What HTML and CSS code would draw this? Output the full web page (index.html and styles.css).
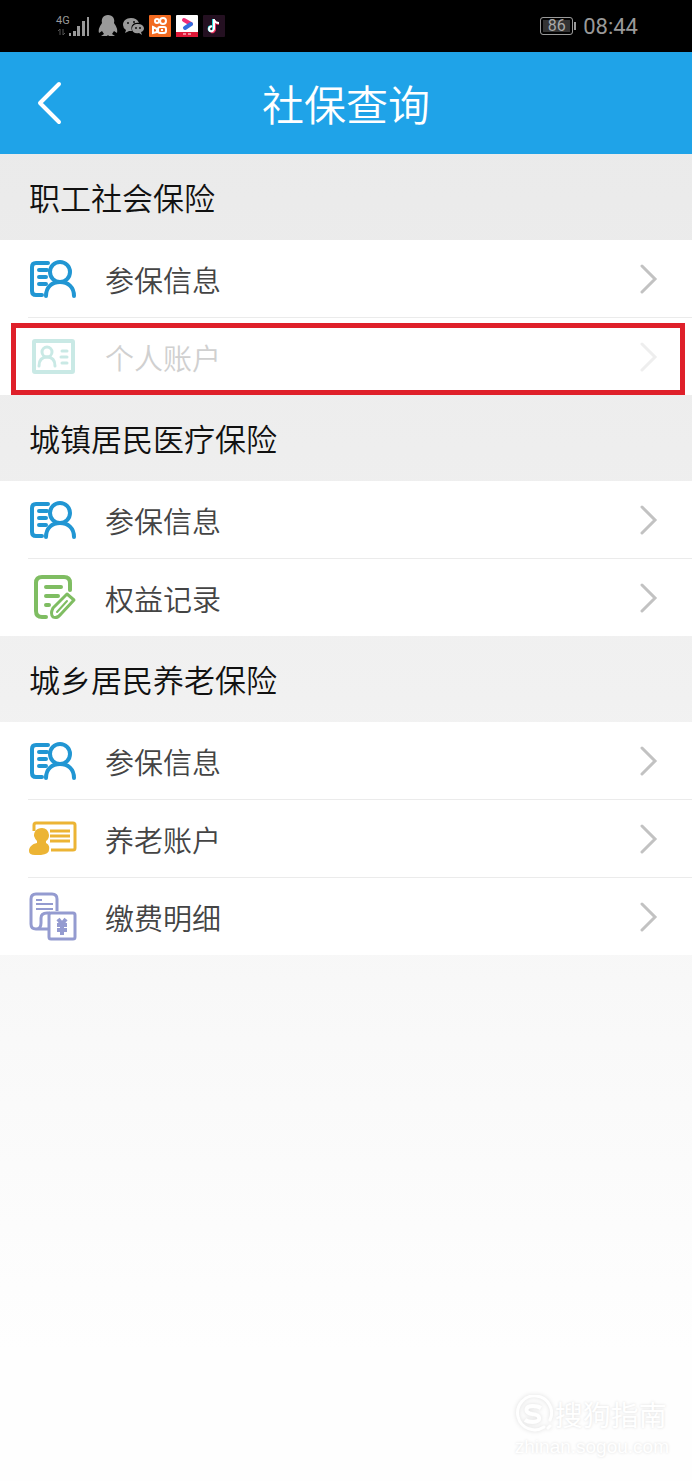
FILE: index.html
```html
<!DOCTYPE html>
<html lang="zh-CN">
<head>
    <meta charset="UTF-8">
    <meta name="viewport" content="width=device-width, initial-scale=1.0">
    <title>社保查询</title>
    <link rel="stylesheet" href="styles.css">
</head>
<body>
    <!-- 图标定义 -->
    <svg class="defs" aria-hidden="true">
        <symbol id="icon-info" viewBox="0 0 48 40">
            <g fill="none" stroke="currentColor" stroke-width="4" stroke-linecap="round" stroke-linejoin="round">
                <path d="M19 4H7Q3 4 3 8V32Q3 36 7 36H13M10 11H18M10 18H17M10 25H17"/>
                <circle cx="31" cy="13" r="10"/>
                <path d="M17 37C17 28 23 23 31 23S45 28 45 37"/>
            </g>
        </symbol>
        <symbol id="icon-card" viewBox="0 0 48 40">
            <g fill="none" stroke="currentColor" stroke-width="4" stroke-linecap="round">
                <rect x="5" y="4" width="39" height="31" rx="1"/>
                <path d="M33 14H38M32 20H38M33 26H38" stroke-width="3"/>
                <circle cx="18" cy="15" r="5" stroke-width="3"/>
                <path d="M10 29C10 23 13 20 18 20S26 23 26 29" stroke-width="3"/>
            </g>
        </symbol>
        <symbol id="icon-record" viewBox="0 0 48 48">
            <g fill="none" stroke="currentColor" stroke-width="4" stroke-linecap="round" stroke-linejoin="round">
                <path d="M17 43H13Q7 43 7 37V9Q7 3 13 3H35Q41 3 41 9V16M17 13H32M17 22H29M17 31H20"/>
                <path d="M38 20L24 34Q21 40 24 43Q28 45 32 40L45 26Z" stroke-width="3"/>
                <path d="M28 38L38 27" stroke-width="2"/>
            </g>
        </symbol>
        <symbol id="icon-pension" viewBox="0 0 48 40">
            <path d="M5 12V6Q5 4 7 4H44Q46 4 46 6V29Q46 31 44 31H22M21 12H41M21 17H41M21 22H41" fill="none" stroke="currentColor" stroke-width="3"/>
            <path d="M13 9C7 9 5 13 5 17Q6 20 8 22V24C3 25 0 28 0 32Q0 36 6 36H12Q20 35 20 31C21 27 19 25 17 24V22Q20 20 20 16Q19 9 13 9Z" fill="currentColor"/>
        </symbol>
        <symbol id="icon-pay" viewBox="0 0 48 50">
            <g fill="none" stroke="currentColor" stroke-width="3" stroke-linejoin="round">
                <path d="M28 19V7Q28 2 23 2H7Q2 2 2 7V32Q2 37 7 37Q12 37 12 31V26Q12 21 18 21H21M7 37H19"/>
                <path d="M7 8H13M7 12H24M7 17H24" stroke-width="2"/>
                <rect x="20" y="21" width="26" height="26" rx="2"/>
                <path d="M29 27L33 32L37 27M28 33H38M28 38H38M33 32V43" stroke-width="4"/>
            </g>
        </symbol>
        <symbol id="icon-next" viewBox="0 0 18 30">
            <path d="M2 2L15 15L2 28" fill="none" stroke="currentColor" stroke-width="3" stroke-linecap="round"/>
        </symbol>
    </svg>

    <div class="status-bar">
        <div class="status-left">
            <div class="signal">
                <span class="network">4G</span>
                <svg width="34" height="22" viewBox="0 0 34 22" aria-hidden="true">
                    <path d="M13 18H15V21H13ZM17 16H20V21H17ZM21 11H24V21H21ZM26 6H29V21H26ZM31 2H33V21H31Z" fill="#999"/>
                    <path d="M4 20V14L2 16M7 14V20L9 18" fill="none" stroke="#555"/>
                </svg>
            </div>
            <svg width="20" height="22" viewBox="0 0 20 22" aria-hidden="true">
                <path d="M10 0C5 0 3 4 4 8C2 11 0 14 1 18L4 16L6 19L3 21H9L10 20L11 21H17L14 19L16 16L19 18C20 14 18 11 16 8C17 4 15 0 10 0Z" fill="#999"/>
            </svg>
            <svg width="21" height="20" viewBox="0 0 21 20" aria-hidden="true">
                <path d="M8 2C3 2 0 5 0 9Q0 12 3 14L2 17L6 15H9C7 9 11 6 16 7Q14 2 8 2Z" fill="#999"/>
                <path d="M15 8C11 8 9 10 9 13S12 18 16 17L19 19L18 16Q21 15 21 12Q20 8 15 8Z" fill="#999"/>
                <g fill="#111"><circle cx="5" cy="7" r="1"/><circle cx="11" cy="6" r="1"/><circle cx="13" cy="12" r="1"/><circle cx="17" cy="12" r="1"/></g>
            </svg>
            <svg width="22" height="22" viewBox="0 0 22 22" aria-hidden="true">
                <rect width="22" height="22" rx="1" fill="#f26a20"/>
                <g fill="none" stroke="#fff" stroke-width="2">
                    <circle cx="8" cy="6" r="2"/><circle cx="14" cy="6" r="3"/>
                    <rect x="9" y="12" width="8" height="6" rx="2"/>
                    <path d="M4 12L8 14V17L4 18ZM12 15H14"/>
                </g>
            </svg>
            <svg width="22" height="22" viewBox="0 0 22 22" aria-hidden="true">
                <rect width="22" height="22" rx="1" fill="#fff"/>
                <path d="M0 17H22V22H0Z" fill="#df1838"/>
                <path d="M8 5L15 9" stroke="#f12b76" stroke-width="4" stroke-linecap="round"/>
                <path d="M15 9L9 13" stroke="#326dde" stroke-width="4" stroke-linecap="round"/>
                <path d="M7 19H10M12 19H15" stroke="#fff"/>
            </svg>
            <svg width="22" height="22" viewBox="0 0 22 22" aria-hidden="true">
                <rect width="22" height="22" rx="1" fill="#241021"/>
                <g fill="none" stroke-width="2">
                    <path d="M10 4V14Q10 17 7 16Q5 15 6 12L8 11M10 5Q12 8 15 8" stroke="#25d9dc"/>
                    <path d="M12 5V15Q11 18 8 17M12 6Q13 9 16 9" stroke="#ed315c"/>
                    <path d="M11 4V14Q10 17 7 16Q5 14 7 12L9 11M11 5Q12 8 16 8" stroke="#fff"/>
                </g>
            </svg>
        </div>
        <div class="status-right">
            <span class="battery">86</span>
            <span class="clock">08:44</span>
        </div>
    </div>

    <header class="nav">
        <button class="back" type="button" aria-label="返回">
            <svg width="26" height="44" viewBox="0 0 26 44">
                <path d="M23 3L4 22L23 41" fill="none" stroke="currentColor" stroke-width="4" stroke-linecap="round" stroke-linejoin="round"/>
            </svg>
        </button>
        <h1>社保查询</h1>
    </header>

    <main>
        <section>
            <h2>职工社会保险</h2>
            <ul class="list">
                <li><a class="row" href="#">
                    <svg class="icon blue"><use href="#icon-info"/></svg>
                    <span class="label">参保信息</span>
                    <svg class="next"><use href="#icon-next"/></svg>
                </a></li>
                <li class="marked"><a class="row faded" href="#">
                    <svg class="icon teal"><use href="#icon-card"/></svg>
                    <span class="label">个人账户</span>
                    <svg class="next"><use href="#icon-next"/></svg>
                </a></li>
            </ul>
        </section>
        <section>
            <h2>城镇居民医疗保险</h2>
            <ul class="list">
                <li><a class="row" href="#">
                    <svg class="icon blue"><use href="#icon-info"/></svg>
                    <span class="label">参保信息</span>
                    <svg class="next"><use href="#icon-next"/></svg>
                </a></li>
                <li><a class="row" href="#">
                    <svg class="icon tall green"><use href="#icon-record"/></svg>
                    <span class="label">权益记录</span>
                    <svg class="next"><use href="#icon-next"/></svg>
                </a></li>
            </ul>
        </section>
        <section>
            <h2>城乡居民养老保险</h2>
            <ul class="list">
                <li><a class="row" href="#">
                    <svg class="icon blue"><use href="#icon-info"/></svg>
                    <span class="label">参保信息</span>
                    <svg class="next"><use href="#icon-next"/></svg>
                </a></li>
                <li><a class="row" href="#">
                    <svg class="icon yellow"><use href="#icon-pension"/></svg>
                    <span class="label">养老账户</span>
                    <svg class="next"><use href="#icon-next"/></svg>
                </a></li>
                <li><a class="row" href="#">
                    <svg class="icon tall purple"><use href="#icon-pay"/></svg>
                    <span class="label">缴费明细</span>
                    <svg class="next"><use href="#icon-next"/></svg>
                </a></li>
            </ul>
        </section>
    </main>

    <footer class="watermark">
        <div class="brand">
            <svg width="38" height="38" viewBox="0 0 38 38" aria-hidden="true">
                <path d="M29 32A17 17 0 1 1 35 25M33 33L35 31" fill="none" stroke="#fff" stroke-width="3" stroke-linecap="round"/>
                <path d="M26 13Q23 11 18 11C10 11 9 18 17 19C27 20 26 27 18 27Q13 27 10 25" fill="none" stroke="#fff" stroke-width="4"/>
            </svg>
            <span>搜狗指南</span>
        </div>
        <div class="site">zhinan.sogou.com</div>
    </footer>
</body>
</html>
```

FILE: styles.css
```css
* {
    box-sizing: border-box;
}
body {
    margin: 0;
    min-height: 100vh;
    display: flex;
    flex-direction: column;
    font-family: "Noto Sans CJK SC", sans-serif;
    font-weight: 350;
    background: linear-gradient(#e9e9e9 0, #ebebeb 200px, #f1f1f1 700px, #f8f8f8 980px, #fefefe 1350px);
}
h1, h2, ul {
    margin: 0;
    padding: 0;
    font-weight: 350;
}
.defs {
    position: absolute;
    width: 0;
    height: 0;
}

/* 状态栏 */
.status-bar {
    height: 52px;
    padding: 0 54px 0 56px;
    display: flex;
    align-items: center;
    justify-content: space-between;
    background: #000;
    color: #999;
    font-family: Roboto, sans-serif;
    font-weight: 400;
}
.status-left, .status-right {
    display: flex;
    align-items: center;
    gap: 5px;
}
.signal {
    position: relative;
    height: 22px;
    margin-right: 3px;
}
.network {
    position: absolute;
    top: 0;
    left: 0;
    font-size: 11px;
    line-height: 12px;
}
.battery {
    position: relative;
    width: 33px;
    height: 18px;
    margin-right: 5px;
    border: 1px solid #999;
    border-radius: 3px;
    box-shadow: inset 0 0 0 2px #000;
    background: #333;
    color: #aaa;
    font-size: 16px;
    line-height: 16px;
    text-align: center;
}
.battery::after {
    content: "";
    position: absolute;
    right: -4px;
    top: 4px;
    width: 2px;
    height: 8px;
    background: #999;
}
.clock {
    font-size: 22px;
}

/* 标题栏 */
.nav {
    height: 102px;
    padding: 0 36px;
    display: grid;
    grid-template-columns: 44px 1fr 44px;
    align-items: center;
    background: #1fa3e8;
    color: #fff;
}
.back {
    padding: 0;
    border: 0;
    background: none;
    color: inherit;
    text-align: left;
    cursor: pointer;
}
.back svg {
    display: block;
}
h1 {
    font-size: 42px;
    line-height: 60px;
    text-align: center;
}

/* 列表 */
h2 {
    height: 86px;
    padding-left: 29px;
    font-size: 31px;
    line-height: 86px;
    color: #111;
}
.list {
    list-style: none;
    background: #fff;
}
.list li {
    position: relative;
}
.list li + li::before {
    content: "";
    display: block;
    height: 1px;
    margin-left: 28px;
    background: #ebebeb;
}
.row {
    height: 77px;
    padding: 0 34px 0 29px;
    display: flex;
    align-items: center;
    color: #444;
    text-decoration: none;
}
.icon {
    width: 48px;
    height: 40px;
}
.icon.tall {
    height: 50px;
}
.label {
    flex: 1;
    margin-left: 28px;
    font-size: 29px;
    line-height: 40px;
}
.next {
    width: 18px;
    height: 30px;
    color: #c2c2c2;
}
.faded .label {
    color: #d0d0d0;
}
.faded .next {
    color: #eee;
}
.marked::after {
    content: "";
    position: absolute;
    inset: 6px 7px 0 11px;
    border: 5px solid #df202a;
    pointer-events: none;
}
.blue {
    color: #2196d3;
}
.teal {
    color: #c9e9e5;
}
.green {
    color: #7fbd62;
}
.yellow {
    color: #ecb434;
}
.purple {
    color: #949bd0;
}

/* 水印 */
.watermark {
    margin-top: auto;
    align-self: flex-end;
    padding: 0 23px 22px 0;
    color: #fff;
    font-weight: 400;
    text-shadow: 0 0 3px #ddd;
}
.brand {
    display: flex;
    align-items: center;
    gap: 2px;
    font-size: 28px;
    line-height: 42px;
}
.brand svg {
    filter: drop-shadow(0 0 2px #ddd);
}
.site {
    font-family: "Liberation Sans", sans-serif;
    font-size: 19px;
    line-height: 24px;
}
```
